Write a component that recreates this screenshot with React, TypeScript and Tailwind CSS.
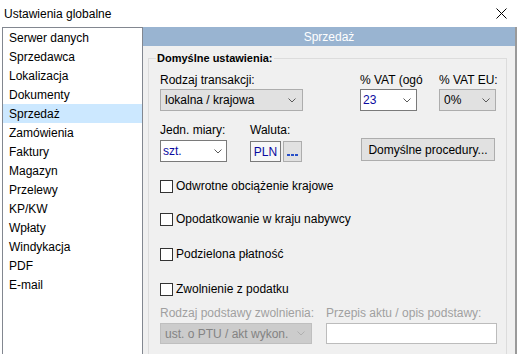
const menu = [
  'Serwer danych',
  'Sprzedawca',
  'Lokalizacja',
  'Dokumenty',
  'Sprzedaż',
  'Zamówienia',
  'Faktury',
  'Magazyn',
  'Przelewy',
  'KP/KW',
  'Wpłaty',
  'Windykacja',
  'PDF',
  'E-mail',
];

function Chevron({ color = '#5a5a5a' }: { color?: string }) {
  return (
    <svg width="8" height="5" viewBox="0 0 8 5" className="shrink-0">
      <polyline points="0.5,0.5 4,4 7.5,0.5" fill="none" stroke={color} strokeWidth="1" />
    </svg>
  );
}

function Checkbox({ label }: { label: string }) {
  return (
    <label className="flex h-[14px] items-center">
      <span className="block h-[13px] w-[13px] border border-[#333333] bg-white" />
      <span className="ml-[3px] leading-[14px] text-black">{label}</span>
    </label>
  );
}

export default function App() {
  return (
    <div
      className="h-[354px] w-[517px] overflow-hidden bg-white text-[12px] text-black"
      style={{ fontFamily: '"Liberation Sans", Arial, sans-serif' }}
    >
      {/* pasek tytułu */}
      <div className="flex h-[27px] items-center justify-between pl-[4px] pr-[10px]">
        <span className="leading-[14px]">Ustawienia globalne</span>
        <svg width="11" height="11" viewBox="0 0 11 11">
          <path d="M0.5 0.5 L10.5 10.5 M10.5 0.5 L0.5 10.5" stroke="#000" strokeWidth="1" />
        </svg>
      </div>

      <div className="flex h-[327px] pl-[2px]">
        {/* lista sekcji */}
        <div className="w-[141px] shrink-0 border-l border-r border-t border-[#828790] bg-white">
          {menu.map((item) => (
            <div
              key={item}
              className={`flex h-[19px] items-center pl-[6px] leading-[14px] ${
                item === 'Sprzedaż' ? 'bg-[#cce8ff]' : ''
              }`}
            >
              {item}
            </div>
          ))}
        </div>

        {/* panel ustawień */}
        <div className="flex flex-1 flex-col border-r-2 border-[#9a9a9a] bg-[#f0f0f0]">
          <div className="flex h-[19px] shrink-0 items-center justify-center bg-[#99b4d1] text-white">
            Sprzedaż
          </div>

          <fieldset className="ml-[5px] mr-[8px] mt-[5px] border border-[#dcdcdc] pb-[10px] pl-[11px]">
            <legend className="-ml-[4px] px-[1px] text-[11px] font-bold leading-[14px]">
              Domyślne ustawienia:
            </legend>

            {/* wiersz 1 */}
            <div className="mt-[8px] flex">
              <div className="w-[143px]">
                <div className="h-[14px] leading-[14px]">Rodzaj transakcji:</div>
                <div className="mt-[2px] flex h-[22px] items-center justify-between border border-[#adadad] bg-[#e1e1e1] pl-[4px] pr-[6px]">
                  <span>lokalna / krajowa</span>
                  <Chevron />
                </div>
              </div>
              <div className="ml-[57px] w-[57px]">
                <div className="h-[14px] whitespace-nowrap leading-[14px]">% VAT (ogó</div>
                <div className="mt-[2px] flex h-[22px] items-center justify-between border border-[#7a7a7a] bg-white pl-[2px] pr-[5px]">
                  <span className="text-[#0a0aa0]">23</span>
                  <Chevron />
                </div>
              </div>
              <div className="ml-[22px] w-[57px]">
                <div className="h-[14px] whitespace-nowrap leading-[14px]">% VAT EU:</div>
                <div className="mt-[2px] flex h-[22px] items-center justify-between border border-[#adadad] bg-[#e1e1e1] pl-[4px] pr-[5px]">
                  <span>0%</span>
                  <Chevron />
                </div>
              </div>
            </div>

            {/* wiersz 2 */}
            <div className="mt-[12px] flex items-start">
              <div className="w-[67px]">
                <div className="h-[14px] leading-[14px]">Jedn. miary:</div>
                <div className="mt-[3px] flex h-[22px] items-center justify-between border border-[#7a7a7a] bg-white pl-[2px] pr-[4px]">
                  <span className="text-[#0a0aa0]">szt.</span>
                  <Chevron />
                </div>
              </div>
              <div className="ml-[23px]">
                <div className="h-[14px] leading-[14px]">Waluta:</div>
                <div className="mt-[4px] flex">
                  <div className="flex h-[21px] w-[31px] items-center justify-center border border-[#7a7a7a] bg-[#f7f7f7] text-[#0a0aa0]">
                    PLN
                  </div>
                  <div className="ml-[2px] flex h-[21px] w-[19px] items-end justify-center gap-[1px] border border-[#adadad] bg-[#e1e1e1] pb-[5px]">
                    <span className="block h-[2px] w-[3px] bg-[#2850c8]" />
                    <span className="block h-[2px] w-[3px] bg-[#2850c8]" />
                    <span className="block h-[2px] w-[3px] bg-[#2850c8]" />
                  </div>
                </div>
              </div>
              <button className="ml-[59px] mt-[15px] flex h-[23px] w-[134px] items-center justify-center border border-[#adadad] bg-[#e1e1e1] text-[12px] leading-[14px]">
                Domyślne procedury...
              </button>
            </div>

            {/* opcje */}
            <div className="mt-[17px]">
              <Checkbox label="Odwrotne obciążenie krajowe" />
            </div>
            <div className="mt-[19px]">
              <Checkbox label="Opodatkowanie w kraju nabywcy" />
            </div>
            <div className="mt-[21px]">
              <Checkbox label="Podzielona płatność" />
            </div>
            <div className="mt-[21px]">
              <Checkbox label="Zwolnienie z podatku" />
            </div>

            {/* podstawa zwolnienia */}
            <div className="mt-[10px] flex">
              <div className="w-[152px]">
                <div className="h-[14px] whitespace-nowrap leading-[14px] text-[#a0a0a0]">
                  Rodzaj podstawy zwolnienia:
                </div>
                <div className="mt-[3px] flex h-[21px] items-center justify-between border border-[#bfbfbf] bg-[#cccccc] pl-[4px] pr-[6px]">
                  <span className="text-[#838383]">ust. o PTU / akt wykon.</span>
                  <Chevron color="#b0b0b0" />
                </div>
              </div>
              <div className="ml-[14px] w-[171px]">
                <div className="h-[14px] whitespace-nowrap leading-[14px] text-[#a0a0a0]">
                  Przepis aktu / opis podstawy:
                </div>
                <div className="mt-[3px] h-[21px] border border-[#bcbcbc] bg-white" />
              </div>
            </div>
          </fieldset>
        </div>
      </div>
    </div>
  );
}
